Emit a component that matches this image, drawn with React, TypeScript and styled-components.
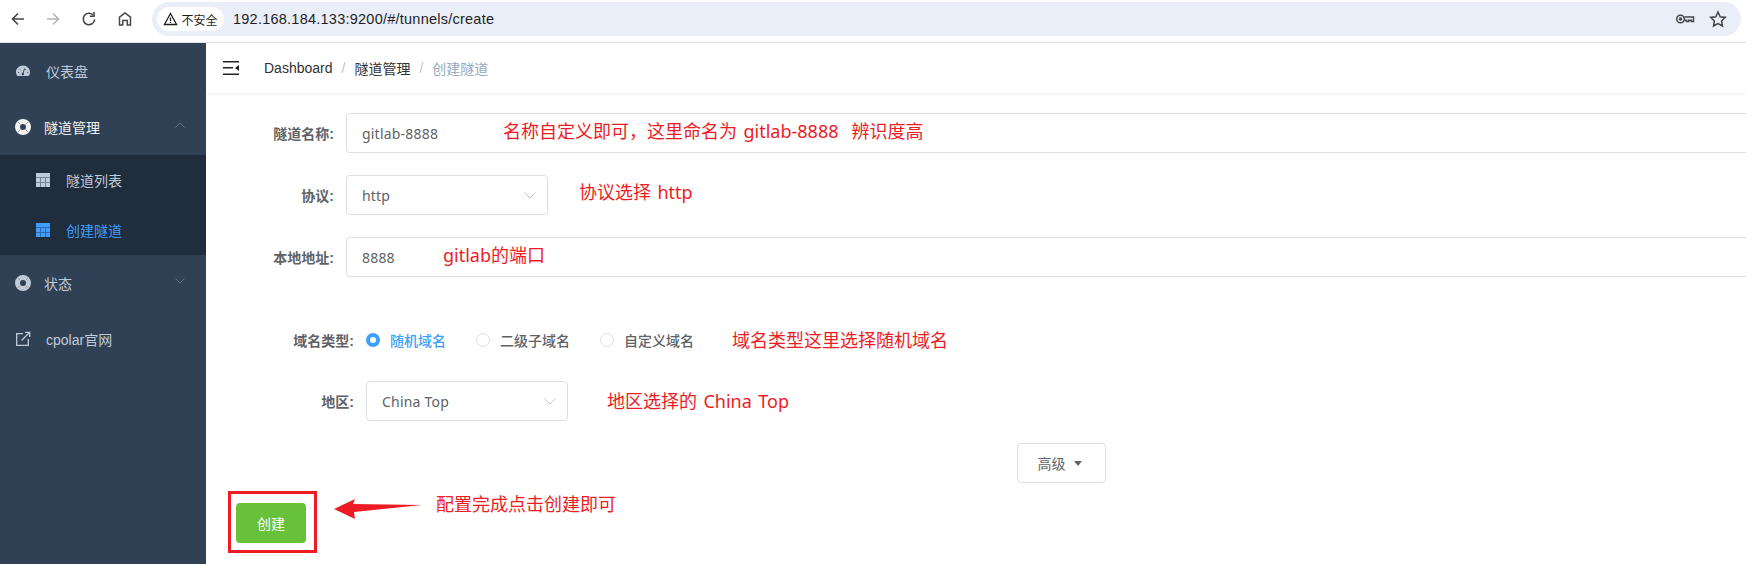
import styled, { createGlobalStyle } from "styled-components";

const GlobalStyle = createGlobalStyle`
  html, body {
    margin: 0;
    padding: 0;
    background: #fff;
  }
  body {
    font-family: "Liberation Sans", "Noto Sans CJK SC", sans-serif;
    font-size: 14px;
  }
`;

const Page = styled.div`
  width: 1746px;
  height: 564px;
  overflow: hidden;
  display: flex;
  flex-direction: column;
`;

/* browser chrome */
const BrowserBar = styled.div`
  height: 40px;
  flex: none;
  display: flex;
  align-items: flex-start;
  padding: 2px 5px 0 0;
  border-bottom: 1px solid #e2e2e2;
`;

const NavIcons = styled.div`
  width: 152px;
  height: 34px;
  flex: none;
  display: flex;
  align-items: center;
`;

const NavButton = styled.svg<{ $gap: number }>`
  width: 18px;
  height: 18px;
  flex: none;
  margin-left: ${(p) => p.$gap}px;
`;

const Omnibox = styled.div`
  flex: 1;
  height: 34px;
  border-radius: 17px;
  background: #e9eef8;
  display: flex;
  align-items: center;
  padding: 0 13px 0 5px;
`;

const SecurityChip = styled.div`
  height: 24px;
  width: 67px;
  border-radius: 12px;
  background: #fff;
  display: flex;
  align-items: center;
  justify-content: center;
  gap: 3px;
  font-size: 12px;
  color: #1f1f1f;
  flex: none;
`;

const Url = styled.div`
  margin-left: 9px;
  font-size: 14.5px;
  letter-spacing: 0.24px;
  color: #1f1f1f;
  flex: 1;
`;

const KeyIcon = styled.svg`
  width: 20px;
  height: 20px;
  flex: none;
`;

const StarIcon = styled.svg`
  width: 20px;
  height: 20px;
  flex: none;
  margin-left: 13px;
`;

/* app */
const Shell = styled.div`
  flex: 1;
  display: flex;
  min-height: 0;
`;

const Sidebar = styled.nav`
  width: 206px;
  flex: none;
  background: #304156;
`;

const MenuItem = styled.div<{ $open?: boolean }>`
  height: 56px;
  display: flex;
  align-items: center;
  padding-left: 15px;
  color: ${(p) => (p.$open ? "#f4f4f5" : "#bfcbd9")};
`;

const MenuIcon = styled.svg`
  width: 16px;
  height: 16px;
  flex: none;
`;

const MenuLabel = styled.span<{ $gap: number }>`
  margin-left: ${(p) => p.$gap}px;
`;

const Caret = styled.svg`
  width: 10px;
  height: 6px;
  margin-left: auto;
  margin-right: 21px;
  margin-top: -4px;
`;

const SubMenu = styled.div`
  background: #1f2d3d;
`;

const SubItem = styled.div<{ $active?: boolean }>`
  height: 50px;
  display: flex;
  align-items: center;
  padding-left: 36px;
  color: ${(p) => (p.$active ? "#409eff" : "#bfcbd9")};
`;

const SubIcon = styled.svg`
  width: 14px;
  height: 14px;
  flex: none;
`;

const SubLabel = styled.span`
  margin-left: 16px;
`;

const Content = styled.main`
  flex: 1;
  min-width: 0;
  overflow: hidden;
`;

const Header = styled.header`
  height: 50px;
  display: flex;
  align-items: center;
  padding-left: 17px;
  box-shadow: 0 1px 4px rgba(0, 21, 41, 0.08);
`;

const Hamburger = styled.svg`
  width: 16px;
  height: 14px;
  flex: none;
`;

const Crumbs = styled.div`
  margin-left: 25px;
  display: flex;
  align-items: center;
  color: #303133;
`;

const CrumbSep = styled.span`
  color: #c0c4cc;
  margin: 0 9px;
`;

const CrumbLast = styled.span`
  color: #97a8be;
`;

const Form = styled.form`
  padding: 20px 0 0;
  display: flex;
  flex-direction: column;
`;

const Row = styled.div<{ $gap?: number }>`
  position: relative;
  display: flex;
  align-items: center;
  height: 40px;
  margin-bottom: ${(p) => p.$gap ?? 22}px;
`;

const Label = styled.label<{ $width: number }>`
  width: ${(p) => p.$width}px;
  flex: none;
  padding-right: 12px;
  box-sizing: border-box;
  text-align: right;
  font-weight: 700;
  font-size: 14px;
  color: #606266;
`;

const TextField = styled.div`
  flex: 1;
  height: 40px;
  box-sizing: border-box;
  margin-right: -12px;
  border: 1px solid #dcdfe6;
  border-radius: 4px;
  padding: 0 15px;
  display: flex;
  align-items: center;
  font-family: "Noto Sans", "Noto Sans CJK SC", sans-serif;
  letter-spacing: 0.2px;
  color: #606266;
`;

const SelectField = styled(TextField)`
  flex: none;
  width: 202px;
  margin-right: 0;
  justify-content: space-between;
  padding-right: 11px;
`;

const Chevron = styled.svg`
  width: 12px;
  height: 7px;
  flex: none;
`;

const Radio = styled.span<{ $checked?: boolean }>`
  width: 14px;
  height: 14px;
  box-sizing: border-box;
  flex: none;
  border-radius: 50%;
  border: ${(p) => (p.$checked ? "4px solid #409eff" : "1px solid #dcdfe6")};
  background: #fff;
`;

const RadioOption = styled.div<{ $checked?: boolean }>`
  display: flex;
  align-items: center;
  gap: 10px;
  margin-right: 30px;
  color: ${(p) => (p.$checked ? "#409eff" : "#606266")};
  font-weight: 500;
`;

const Note = styled.span<{ $left: number; $top: number }>`
  position: absolute;
  left: ${(p) => p.$left}px;
  top: ${(p) => p.$top}px;
  font-family: "Noto Sans", "Noto Sans CJK SC", sans-serif;
  font-size: 18px;
  line-height: 24px;
  word-spacing: 1.8px;
  color: #ed1c24;
  white-space: pre;
`;

const AdvancedRow = styled.div`
  margin: 0 0 20px 811px;
`;

const AdvancedButton = styled.button`
  width: 89px;
  height: 40px;
  box-sizing: border-box;
  border: 1px solid #dcdfe6;
  border-radius: 4px;
  background: #fff;
  color: #606266;
  font: inherit;
  display: flex;
  align-items: center;
  justify-content: center;
  gap: 8px;
  padding: 0 4px 0 0;
`;

const DownTriangle = styled.span`
  width: 0;
  height: 0;
  border-left: 4.5px solid transparent;
  border-right: 4.5px solid transparent;
  border-top: 5px solid #606266;
`;

const SubmitRow = styled.div`
  position: relative;
  padding-left: 30px;
`;

const SubmitButton = styled.button`
  width: 70px;
  height: 40px;
  border: none;
  border-radius: 4px;
  background: #67c23a;
  color: #fff;
  font: inherit;
  padding: 0;
`;

const Highlight = styled.div`
  position: absolute;
  left: 22px;
  top: -12px;
  width: 89px;
  height: 62px;
  box-sizing: border-box;
  border: 3px solid #ed1c24;
`;

const Arrow = styled.svg`
  position: absolute;
  left: 128px;
  top: -4px;
  width: 90px;
  height: 20px;
`;

const RingIcon = ({ color }: { color: string }) => (
  <MenuIcon viewBox="0 0 16 16">
    <circle cx="8" cy="8" r="5.5" fill="none" stroke={color} strokeWidth="5" />
    <path d="M2.8 2.8l2.6 2.6M13.2 2.8l-2.6 2.6M2.8 13.2l2.6-2.6M13.2 13.2l-2.6-2.6" stroke="#a8977f" strokeWidth="1" />
  </MenuIcon>
);

const GridIcon = ({ color, bg }: { color: string; bg: string }) => (
  <SubIcon viewBox="0 0 14 14">
    <rect width="14" height="14" fill={color} />
    <path d="M0 4.5h14M0 9.500h14M4.500 4v10M9.500 4v10" stroke={bg} strokeWidth="1" opacity="0.45" />
  </SubIcon>
);

const App = () => {
  return (
    <Page>
      <GlobalStyle />
      <BrowserBar>
        <NavIcons>
          <NavButton $gap={9} viewBox="0 0 18 18" fill="none" stroke="#474747" strokeWidth="1.6">
            <path d="M15 9H3.5M9 3.5L3.5 9L9 14.5" />
          </NavButton>
          <NavButton $gap={17} viewBox="0 0 18 18" fill="none" stroke="#b4b4b4" strokeWidth="1.6">
            <path d="M3 9h11.5M9 3.5L14.5 9L9 14.5" />
          </NavButton>
          <NavButton $gap={18} viewBox="0 0 18 18" fill="none" stroke="#474747" strokeWidth="1.6">
            <path d="M14.6 9.5A5.7 5.7 0 1 1 13 5" />
            <path d="M14 2v4.2h-4.2" />
          </NavButton>
          <NavButton $gap={18} viewBox="0 0 18 18" fill="none" stroke="#474747" strokeWidth="1.5">
            <path d="M3.5 15V7.2L9 3l5.5 4.2V15h-3.2v-4.5H6.7V15z" />
          </NavButton>
        </NavIcons>
        <Omnibox>
          <SecurityChip>
            <svg width="15" height="14" viewBox="0 0 15 14" fill="none" stroke="#1f1f1f" strokeWidth="1.3">
              <path d="M7.5 1.5L13.6 12.5H1.4z" />
              <path d="M7.5 5.5v3.6M7.5 9.8v1.2" />
            </svg>
            <span>不安全</span>
          </SecurityChip>
          <Url>192.168.184.133:9200/#/tunnels/create</Url>
          <KeyIcon viewBox="0 0 20 20" fill="none" stroke="#474747" strokeWidth="1.5">
            <circle cx="5.5" cy="10" r="3.8" />
            <circle cx="5.5" cy="10" r="1" fill="#474747" />
            <path d="M9.3 8h9.2v4.600h-2.200v-1.400h-2.600v1.400h-2.200v-1.400H9.300" />
          </KeyIcon>
          <StarIcon viewBox="0 0 20 20" fill="none" stroke="#474747" strokeWidth="1.5">
            <path d="M10 3l2.200 4.700 5.100.7-3.700 3.500.9 5.100L10 14.500l-4.500 2.500.9-5.100-3.700-3.500 5.100-.7z" />
          </StarIcon>
        </Omnibox>
      </BrowserBar>
      <Shell>
        <Sidebar>
          <MenuItem>
            <MenuIcon viewBox="0 0 16 16">
              <path
                fill="#bfcbd9"
                d="M8 2.500C4 2.500 1 5.500 1 9.200c0 1.300.4 2.400 1 3.400.1.200.4.400.6.400h10.800c.2 0 .5-.2.6-.4.600-1 1-2.100 1-3.400 0-3.700-3-6.700-7-6.700z"
              />
              <path d="M7.800 11L9.600 5.500" stroke="#304156" strokeWidth="1" />
              <circle cx="7.800" cy="11" r="1.200" fill="#304156" />
              <path d="M3 9.500h1.200M4.700 6l.8.8M12 9.500h1.200M11 6l-.7.700" stroke="#304156" strokeWidth="0.8" />
            </MenuIcon>
            <MenuLabel $gap={15}>仪表盘</MenuLabel>
          </MenuItem>
          <MenuItem $open>
            <RingIcon color="#f4f4f5" />
            <MenuLabel $gap={13}>隧道管理</MenuLabel>
            <Caret viewBox="0 0 10 6" fill="none" stroke="#66727f" strokeWidth="1">
              <path d="M.5 5.500L5 1l4.500 4.500" />
            </Caret>
          </MenuItem>
          <SubMenu>
            <SubItem>
              <GridIcon color="#bfcbd9" bg="#1f2d3d" />
              <SubLabel>隧道列表</SubLabel>
            </SubItem>
            <SubItem $active>
              <GridIcon color="#409eff" bg="#1f2d3d" />
              <SubLabel>创建隧道</SubLabel>
            </SubItem>
          </SubMenu>
          <MenuItem>
            <RingIcon color="#bfcbd9" />
            <MenuLabel $gap={13}>状态</MenuLabel>
            <Caret viewBox="0 0 10 6" fill="none" stroke="#66727f" strokeWidth="1">
              <path d="M.5.500L5 5l4.500-4.500" />
            </Caret>
          </MenuItem>
          <MenuItem>
            <MenuIcon viewBox="0 0 16 16" fill="none" stroke="#bfcbd9" strokeWidth="1.3">
              <path d="M8 2.700H1.700v11.600h11.600V8" />
              <path d="M6.500 9.500L14.500 1.500M10 1.300h4.700V6" />
            </MenuIcon>
            <MenuLabel $gap={15}>cpolar官网</MenuLabel>
          </MenuItem>
        </Sidebar>
        <Content>
          <Header>
            <Hamburger viewBox="0 0 16 14" fill="#222">
              <path d="M0 0h16v1.500H0zM0 6h10v1.500H0zM0 12.500h16V14H0z" />
              <path d="M16 4v6l-4-3z" />
            </Hamburger>
            <Crumbs>
              <span>Dashboard</span>
              <CrumbSep>/</CrumbSep>
              <span>隧道管理</span>
              <CrumbSep>/</CrumbSep>
              <CrumbLast>创建隧道</CrumbLast>
            </Crumbs>
          </Header>
          <Form>
            <Row>
              <Label $width={140}>隧道名称:</Label>
              <TextField>gitlab-8888</TextField>
              <Note $left={297} $top={6}>名称自定义即可，这里命名为 gitlab-8888  辨识度高</Note>
            </Row>
            <Row>
              <Label $width={140}>协议:</Label>
              <SelectField>
                http
                <Chevron viewBox="0 0 12 7" fill="none" stroke="#c0c4cc" strokeWidth="1">
                  <path d="M.5.500L6 6l5.500-5.500" />
                </Chevron>
              </SelectField>
              <Note $left={373} $top={5}>协议选择 http</Note>
            </Row>
            <Row $gap={43}>
              <Label $width={140}>本地地址:</Label>
              <TextField>8888</TextField>
              <Note $left={237} $top={6}>gitlab的端口</Note>
            </Row>
            <Row $gap={21}>
              <Label $width={160}>域名类型:</Label>
              <RadioOption $checked>
                <Radio $checked />
                随机域名
              </RadioOption>
              <RadioOption>
                <Radio />
                二级子域名
              </RadioOption>
              <RadioOption>
                <Radio />
                自定义域名
              </RadioOption>
              <Note $left={526} $top={8}>域名类型这里选择随机域名</Note>
            </Row>
            <Row>
              <Label $width={160}>地区:</Label>
              <SelectField>
                China Top
                <Chevron viewBox="0 0 12 7" fill="none" stroke="#c0c4cc" strokeWidth="1">
                  <path d="M.5.500L6 6l5.500-5.500" />
                </Chevron>
              </SelectField>
              <Note $left={401} $top={8}>地区选择的 China Top</Note>
            </Row>
            <AdvancedRow>
              <AdvancedButton type="button">
                高级
                <DownTriangle />
              </AdvancedButton>
            </AdvancedRow>
            <SubmitRow>
              <SubmitButton type="button">创建</SubmitButton>
              <Highlight />
              <Arrow viewBox="0 0 90 20" fill="#ed1c24">
                <path d="M0 10L21 0L19 5L88 6L20 13L21 20z" />
              </Arrow>
              <Note $left={230} $top={-11}>配置完成点击创建即可</Note>
            </SubmitRow>
          </Form>
        </Content>
      </Shell>
    </Page>
  );
};

export default App;
